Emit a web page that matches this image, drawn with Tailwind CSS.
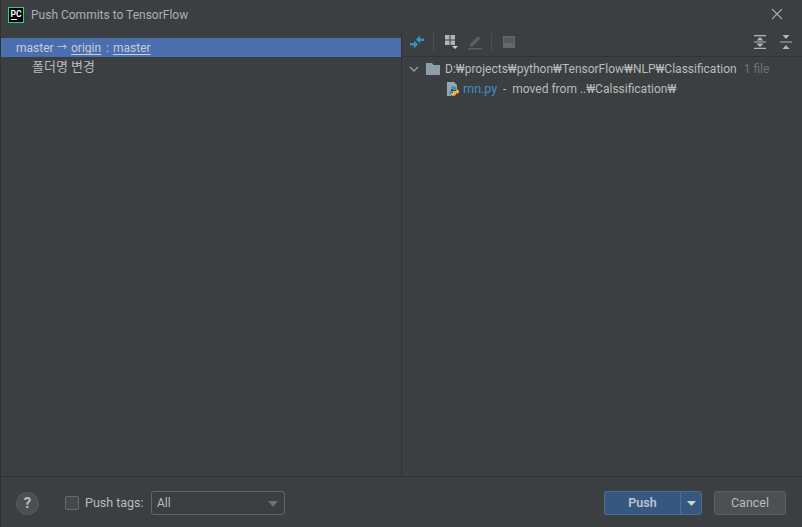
<!DOCTYPE html>
<html><head><meta charset="utf-8"><script src="https://cdn.jsdelivr.net/npm/@tailwindcss/browser@4"></script></head>
<body class="bg-[#3c3f41]">
<div class="w-[802px] h-[527px] flex flex-col bg-[#3c3f41] border-l border-[#2f3133] overflow-hidden text-[12px] text-[#bbbbbb] font-['Roboto','Noto_Sans_CJK_KR',sans-serif]">
  <div class="h-[30px] flex items-center shrink-0">
    <svg class="ml-[7px] w-[16px] h-[16px]" viewBox="0 0 16 16"><rect width="16" height="16" fill="#21d789"/><rect x="1" y="1" width="14" height="14" fill="#000"/><text x="2.500" y="9.500" font-family="Roboto" font-weight="700" font-size="8.500" fill="#fff">PC</text><rect x="3" y="12" width="6" height="1" fill="#fff"/></svg>
    <span class="ml-[7px] text-[#a9b0b6]">Push Commits to TensorFlow</span>
    <svg class="ml-auto mr-[19px] -mt-[2px] w-[12px] h-[12px]" viewBox="0 0 12 12" fill="none" stroke="#a9a9a9" stroke-width="1.1"><path d="M1 1l10 10M11 1L1 11"/></svg>
  </div>
  <div class="flex-1 flex min-h-0 border-b border-[#323232]">
    <div class="w-[401px] shrink-0 border-r border-[#323232] pt-[8px]">
      <div class="h-[19px] bg-[#4b6eaf] pl-[15px] flex items-center pt-[1px] text-[#c6cdd8]">
        <span class="w-[36px]">master</span>
        <span class="ml-[5px] w-[10px] text-center text-[10px] leading-none">→</span>
        <span class="ml-[4px] w-[31px] underline underline-offset-2">origin</span>
        <span class="ml-[4px] w-[3px]">:</span>
        <span class="ml-[4px] underline underline-offset-2">master</span>
      </div>
      <div class="h-[19px] pl-[31px] flex items-center pt-[1px] text-[13px]">폴더명 변경</div>
    </div>
    <div class="flex-1 flex flex-col min-w-0">
      <div class="h-[27px] border-b border-[#323232] flex items-center shrink-0 relative pb-[2px]">
        <svg class="ml-[7px] w-[16px] h-[16px]" viewBox="0 0 16 16" fill="#3592c4"><path d="M7 5.500L11 1.500V4.500H15V7H11V9.500zM9 10.500L5 14.500V11.500H1V9H5V6.500z"/></svg>
        <div class="ml-[8px] w-px h-[18px] bg-[#4d5052]"></div>
        <svg class="ml-[10px] w-[16px] h-[18px]" viewBox="0 0 16 18" fill="#b0b3b5"><rect x="1" y="2" width="4.500" height="4.500"/><rect x="6.500" y="2" width="4.500" height="4.500"/><rect x="1" y="7.500" width="4.500" height="4.500"/><rect x="6.500" y="7.500" width="4.500" height="4.500"/><path d="M8 13h6l-3 3z" fill="#d0d0d0"/></svg>
        <svg class="ml-[7px] w-[16px] h-[16px]" viewBox="0 0 16 16" fill="#5c5f61"><path d="M3 10l8-8 2.500 2.500L5.500 12.500H3zM1 14h14v1.500H1z"/></svg>
        <div class="ml-[8px] w-px h-[18px] bg-[#4d5052]"></div>
        <svg class="ml-[9px] w-[16px] h-[16px]" viewBox="0 0 16 16"><rect x="2" y="2" width="12" height="12" fill="#65686a"/><rect x="3.500" y="3.500" width="9" height="5.500" fill="#55585a"/></svg>
        <svg class="absolute left-[350px] top-[4px] w-[16px] h-[16px]" viewBox="0 0 16 16" fill="#b4b4b4"><path d="M2 1h12v1.300H2zM2 13.700h12V15H2zM2 7.400h12v1.200H2zM8 3l3.500 3.500h-7zM8 13l-3.500-3.500h7z"/></svg>
        <svg class="absolute left-[376px] top-[4px] w-[16px] h-[16px]" viewBox="0 0 16 16" fill="#b4b4b4"><path d="M2 7.400h12v1.200H2zM4.500 1h7L8 5zM8 11l3.500 4h-7z"/></svg>
      </div>
      <div class="h-[20px] mt-[2px] flex items-center whitespace-nowrap">
        <svg class="ml-[7px] w-[10px] h-[10px]" viewBox="0 0 10 10" fill="none" stroke="#9a9da0" stroke-width="1.3"><path d="M1 3l4 4 4-4"/></svg>
        <svg class="ml-[6px] w-[16px] h-[14px]" viewBox="0 0 16 14" fill="#8b9ea9"><path d="M1 1h6l1.500 2H15v10H1z"/></svg>
        <span class="ml-[4px]">D:₩projects₩python₩TensorFlow₩NLP₩Classification</span><span class="ml-[7px] text-[#6f7274]">1 file</span>
      </div>
      <div class="h-[20px] flex items-center whitespace-nowrap">
        <svg class="ml-[43px] w-[16px] h-[16px]" viewBox="0 0 16 16"><path d="M2 1h7l3 3v4H6v7H2z" fill="#9aa7b0"/><path d="M6 7c0-1 1-2 2.500-2S11 6 11 7v2H8v1H5.500C4.500 10 4 11 4 12s.5 2 1.500 2H7v-3h3z" fill="#3592c4"/><path d="M8 10h3V8.500h1.500c1 0 1.500 1 1.500 2s-.5 2-1.500 2H11c0 1.500-1 2.500-2.500 2.500S6 14 6 13.500V12h2z" fill="#f4af3d"/></svg>
        <span class="ml-[2px] w-[34px] text-[#3f8fc4] text-[12.5px]">rnn.py</span><span class="ml-[6px]">-</span><span class="ml-[6px]">moved from ..₩Calssification₩</span>
      </div>
    </div>
  </div>
  <div class="h-[50px] shrink-0 flex items-center relative pt-[2px]">
    <div class="ml-[15px] w-[23px] h-[23px] rounded-full bg-[#4c4f51] border border-[#5a5d5f] flex items-center justify-center font-bold text-[15px] text-[#bbbbbb]">?</div>
    <div class="ml-[26px] w-[14px] h-[14px] rounded-[2px] bg-[#45484a] border border-[#6b6b6b]"></div>
    <span class="ml-[6px] w-[55px] text-[12.5px] whitespace-nowrap">Push tags:</span>
    <div class="ml-[11px] w-[134px] h-[24px] rounded-[3px] border border-[#646464] flex items-center pl-[5px] relative">All<svg class="absolute right-[6px] top-[9px] w-[10px] h-[6px]" viewBox="0 0 10 6" fill="#6e7173"><path d="M0 0h10L5 6z"/></svg></div>
    <div class="ml-auto flex">
      <div class="w-[76px] h-[24px] bg-[#365880] border border-[#4c708c] rounded-l-[3px] flex items-center justify-center font-semibold text-[12.5px] text-[#bbc5d0] border-r-0">Push</div>
      <div class="w-[22px] h-[24px] bg-[#365880] border border-[#4c708c] rounded-r-[3px] flex items-center justify-center"><svg class="w-[9px] h-[5px]" viewBox="0 0 9 5" fill="#c9d3dc"><path d="M0 0h9L4.500 5z"/></svg></div>
    </div>
    <div class="ml-[12px] mr-[16px] w-[72px] h-[24px] rounded-[3px] bg-[#4c5052] border border-[#5e6060] flex items-center justify-center text-[12.5px]">Cancel</div>
  </div>
</div>
</body></html>
